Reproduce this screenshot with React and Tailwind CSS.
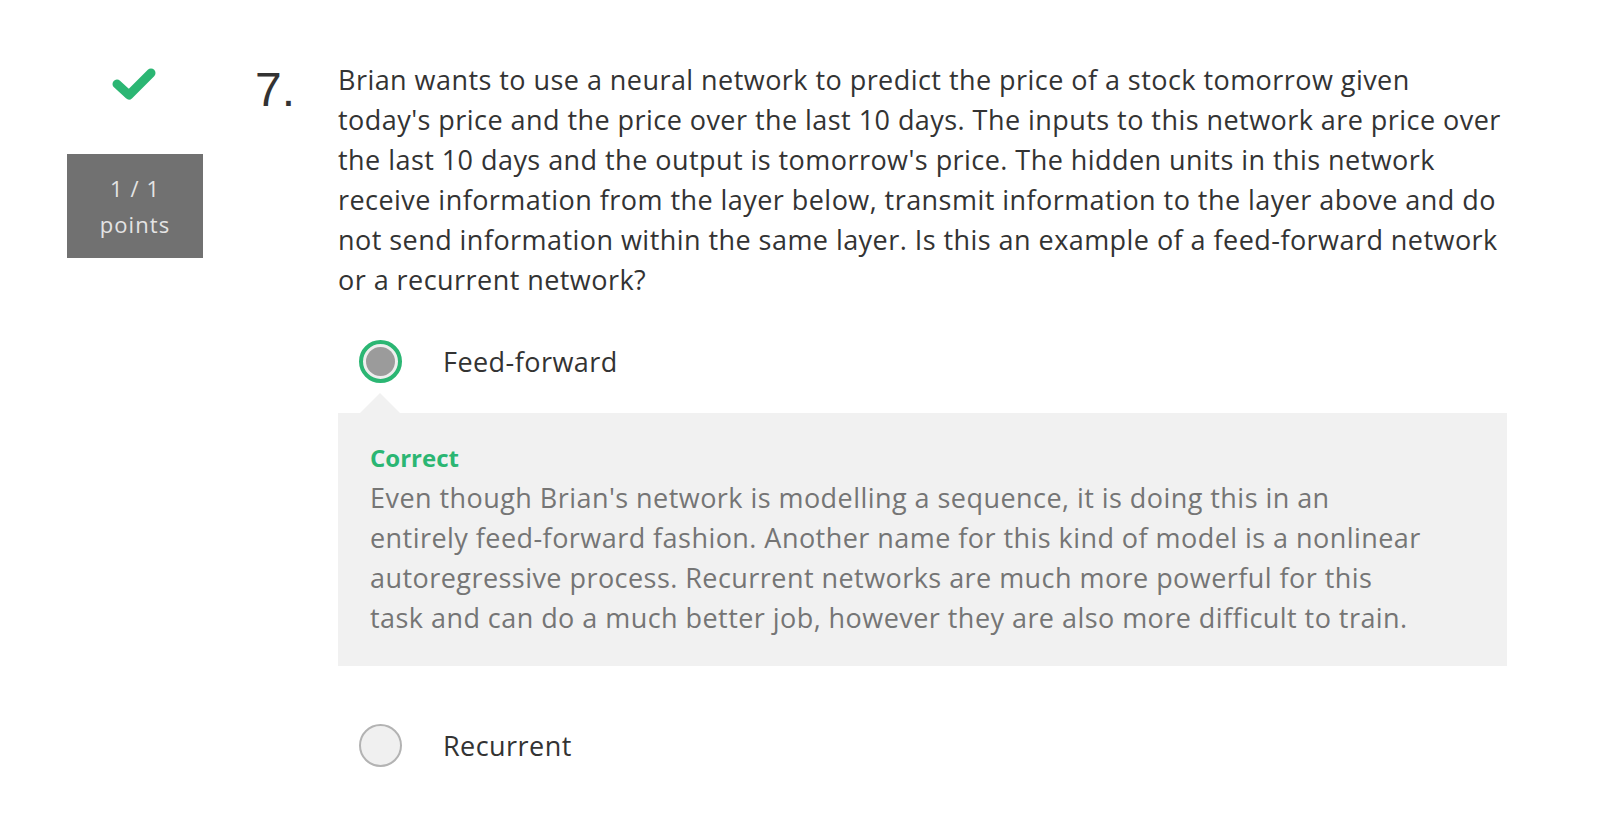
import React from 'react';

const sans = { fontFamily: '"Open Sans", "Noto Sans", sans-serif' };

const Check = () => (
  <svg width="46" height="38" viewBox="0 0 46 38" className="block">
    <polyline
      points="5,17 17,28 39,6"
      fill="none"
      stroke="#2bb673"
      strokeWidth="9"
      strokeLinecap="round"
      strokeLinejoin="round"
    />
  </svg>
);

const Radio = ({ checked }) =>
  checked ? (
    <div className="w-[43px] h-[43px] rounded-full border-[4px] border-[#2bb673] bg-[#eeeeee] p-[3px] shrink-0">
      <div className="w-full h-full rounded-full bg-[#9b9b9b]" />
    </div>
  ) : (
    <div className="w-[43px] h-[43px] rounded-full border-2 border-[#b3b3b3] bg-[#f0f0f0] shrink-0" />
  );

const App = () => {
  return (
    <div className="w-[1607px] h-[815px] bg-white overflow-hidden" style={sans}>
      <div className="flex pt-[60px]">
        {/* Score column */}
        <div className="ml-[67px] w-[136px] flex flex-col items-center">
          <div className="mt-[7px] -ml-[1px]">
            <Check />
          </div>
          <div className="mt-[49px] w-full h-[104px] bg-[#717171] flex flex-col items-center justify-center text-[22px] tracking-[1.1px] leading-[36px] text-[#e4e4e4]">
            <span>1 / 1</span>
            <span>points</span>
          </div>
        </div>

        {/* Question number */}
        <div
          className="ml-[52px] w-[83px] text-[48px] leading-[48px] mt-[6px] text-[#333333]"
          style={{ fontFamily: '"Liberation Sans", Arial, sans-serif' }}
        >
          7.
        </div>

        {/* Question body */}
        <div className="w-[1169px] text-[27px] tracking-[0.45px] leading-[40px]">
          <p className="text-[#333333] pr-[6px]">
            Brian wants to use a neural network to predict the price of a stock tomorrow given today's price and the price over the last 10 days. The inputs to this network are price over the last 10 days and the output is tomorrow's price. The hidden units in this network receive information from the layer below, transmit information to the layer above and do not send information within the same layer. Is this an example of a feed-forward network or a recurrent network?
          </p>

          <div className="mt-[40px] ml-[21px] flex items-center gap-[41px]">
            <Radio checked />
            <span className="text-[#333333]">Feed-forward</span>
          </div>

          {/* Feedback */}
          <div className="ml-[22px] mt-[10px] w-0 h-0 border-l-[20px] border-r-[20px] border-b-[20px] border-l-transparent border-r-transparent border-b-[#f1f1f1]" />
          <div className="bg-[#f1f1f1] pt-[29px] pb-[28px] pl-[32px] pr-[77px]">
            <div className="text-[24px] tracking-normal leading-[32px] font-bold text-[#2bb673]">Correct</div>
            <p className="mt-[4px] text-[#757575]">
              Even though Brian's network is modelling a sequence, it is doing this in an entirely feed-forward fashion. Another name for this kind of model is a nonlinear autoregressive process. Recurrent networks are much more powerful for this task and can do a much better job, however they are also more difficult to train.
            </p>
          </div>

          <div className="mt-[58px] ml-[21px] flex items-center gap-[41px]">
            <Radio />
            <span className="text-[#333333]">Recurrent</span>
          </div>
        </div>
      </div>
    </div>
  );
};

export default App;
